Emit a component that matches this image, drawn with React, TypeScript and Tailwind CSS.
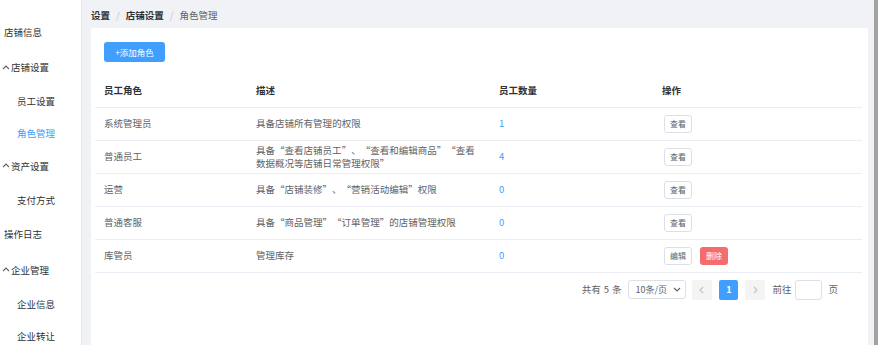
import React from "react";

const menu = [
  { title: "店铺信息", level: 0, h: "h-[36px]" },
  { title: "店铺设置", level: 2, h: "h-[35px]" },
  { title: "员工设置", level: 1, h: "h-[32px]" },
  { title: "角色管理", level: 1, h: "h-[32px]", active: true },
  { title: "资产设置", level: 2, h: "h-[34px]" },
  { title: "支付方式", level: 1, h: "h-[34px]" },
  { title: "操作日志", level: 0, h: "h-[35px]" },
  { title: "企业管理", level: 2, h: "h-[36px]" },
  { title: "企业信息", level: 1, h: "h-[33px]" },
  { title: "企业转让", level: 1, h: "h-[30px]" },
];

const roles = [
  { name: "系统管理员", desc: "具备店铺所有管理的权限", count: 1 },
  {
    name: "普通员工",
    desc: "具备“查看店铺员工”、“查看和编辑商品”“查看数据概况等店铺日常管理权限”",
    count: 4,
  },
  { name: "运营", desc: "具备“店铺装修”、“营销活动编辑”权限", count: 0 },
  { name: "普通客服", desc: "具备“商品管理”“订单管理”的店铺管理权限", count: 0 },
  { name: "库管员", desc: "管理库存", count: 0, editable: true },
];

// full-width quotes, like the original font draws them
function Desc({ text }: { text: string }) {
  return (
    <>
      {text.split("").map((c, i) =>
        c === "“" ? (
          <span key={i} className="inline-block w-[9.5px] text-right">
            {c}
          </span>
        ) : c === "”" || c === "、" ? (
          <span key={i} className="inline-block w-[9.5px] text-left">
            {c}
          </span>
        ) : (
          c
        )
      )}
    </>
  );
}

function Chevron({ dir, className }: { dir: "up" | "down" | "left" | "right"; className?: string }) {
  const pts = {
    up: "1,5 4,2 7,5",
    down: "1,2 4,5 7,2",
    left: "5,1 2,4 5,7",
    right: "3,1 6,4 3,7",
  }[dir];
  return (
    <svg viewBox="0 0 8 8" className={className} fill="none" stroke="currentColor" strokeWidth="1.1">
      <polyline points={pts} />
    </svg>
  );
}

function Sidebar() {
  return (
    <div className="w-[82px] shrink-0 bg-white border-r border-[#e4e6ea] pt-[14px] text-[9.5px] text-[#303133]">
      {menu.map((item, i) => (
        <div
          key={i}
          className={`${item.h} flex items-center ${
            item.level === 0 ? "pl-[4px]" : item.level === 1 ? "pl-[17px]" : "pl-[2px]"
          } ${item.active ? "text-[#409eff]" : ""}`}
        >
          {item.level === 2 && <Chevron dir="up" className="w-[8px] h-[8px] mr-[1px] text-[#606266]" />}
          {item.title}
        </div>
      ))}
    </div>
  );
}

function Pagination() {
  return (
    <div className="flex items-center justify-end h-[20px] mt-[7px] pr-[24px] text-[9.5px] text-[#606266]">
      <span>
        共有<span className="mx-[3px]">5</span>条
      </span>
      <div className="ml-[7px] w-[58px] h-[19px] border border-[#dcdfe6] rounded-[3px] flex items-center justify-between pl-[6px] pr-[4px] text-[9px]">
        <span>10条/页</span>
        <Chevron dir="down" className="w-[8px] h-[8px] text-[#606266]" />
      </div>
      <div className="ml-[6px] w-[20px] h-[20px] rounded-[2px] bg-[#f4f4f5] flex items-center justify-center text-[#c0c4cc]">
        <Chevron dir="left" className="w-[8px] h-[8px]" />
      </div>
      <div className="ml-[7px] w-[19px] h-[20px] rounded-[2px] bg-[#409eff] flex items-center justify-center text-white font-bold text-[9px]">
        1
      </div>
      <div className="ml-[7px] w-[20px] h-[20px] rounded-[2px] bg-[#f4f4f5] flex items-center justify-center text-[#c0c4cc]">
        <Chevron dir="right" className="w-[8px] h-[8px]" />
      </div>
      <span className="ml-[7px]">前往</span>
      <div className="ml-[4px] w-[27px] h-[20px] border border-[#dcdfe6] rounded-[3px] bg-white" />
      <span className="ml-[6px]">页</span>
    </div>
  );
}

export default function App() {
  return (
    <div className="w-[878px] h-[345px] overflow-hidden flex bg-[#f0f2f5] font-['Noto_Sans_CJK_SC',sans-serif]">
      <Sidebar />
      <div className="flex-1 flex flex-col pl-[9px] pr-[6px] min-w-0">
        <div className="h-[28px] flex items-center pt-[2px] text-[9.5px]">
          <span className="font-bold text-[#303133]">设置</span>
          <span className="mx-[6px] text-[#c0c4cc]">/</span>
          <span className="font-bold text-[#303133]">店铺设置</span>
          <span className="mx-[6px] text-[#c0c4cc]">/</span>
          <span className="text-[#606266]">角色管理</span>
        </div>
        <div className="flex-1 bg-white rounded-t-[2px] pl-[4px] pr-[6px]">
          <div className="pt-[14px] pl-[9px]">
            <button className="h-[20px] w-[61px] rounded-[3px] bg-[#409eff] text-white text-[8.5px] flex items-center justify-center">
              +添加角色
            </button>
          </div>
          <table className="w-full table-fixed border-collapse mt-[11px] text-[9.5px]">
            <colgroup>
              <col className="w-[152px]" />
              <col className="w-[243px]" />
              <col className="w-[163px]" />
              <col className="w-[209px]" />
            </colgroup>
            <thead>
              <tr className="h-[34px] border-b border-[#ebeef5] text-[#303133] font-bold text-left">
                <th className="px-[9px]">员工角色</th>
                <th className="px-[9px]">描述</th>
                <th className="px-[9px]">员工数量</th>
                <th className="px-[9px]">操作</th>
              </tr>
            </thead>
            <tbody className="text-[#606266]">
              {roles.map((r, i) => (
                <tr key={i} className="h-[33px] border-b border-[#ebeef5]">
                  <td className="px-[9px] align-middle">{r.name}</td>
                  <td className="px-[9px] align-middle leading-[13px]">
                    <Desc text={r.desc} />
                  </td>
                  <td className="px-[9px] align-middle text-[#409eff]">{r.count}</td>
                  <td className="px-[9px] pl-[11px] align-middle">
                    <div className="flex items-center gap-[8px]">
                      <button className="h-[18px] w-[28px] rounded-[3px] border border-[#dcdfe6] bg-white text-[8px] text-[#606266] flex items-center justify-center">
                        {r.editable ? "编辑" : "查看"}
                      </button>
                      {r.editable && (
                        <button className="h-[18px] w-[28px] rounded-[3px] bg-[#f56c6c] text-white text-[8px] flex items-center justify-center">
                          删除
                        </button>
                      )}
                    </div>
                  </td>
                </tr>
              ))}
            </tbody>
          </table>
          <Pagination />
        </div>
      </div>
      <div className="w-[4px] shrink-0 bg-[#a3a3a3]" />
    </div>
  );
}
